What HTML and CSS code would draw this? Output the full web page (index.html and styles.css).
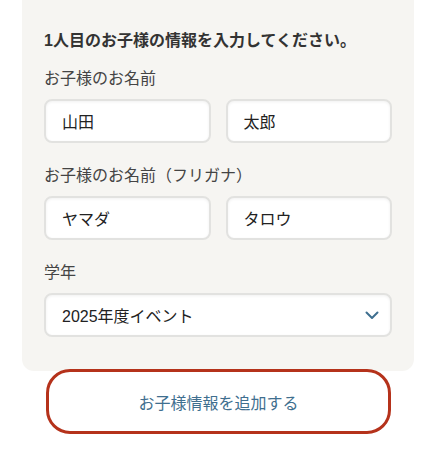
FILE: index.html
```html
<!DOCTYPE html>
<html lang="ja">
<head>
<meta charset="utf-8">
<link rel="stylesheet" href="styles.css">
</head>
<body>
<div class="panel">
  <h2 class="heading">1人目のお子様の情報を入力してください。</h2>
  <div class="field">
    <div class="label">お子様のお名前</div>
    <div class="pair">
      <div class="input">山田</div>
      <div class="input">太郎</div>
    </div>
  </div>
  <div class="field">
    <div class="label">お子様のお名前（フリガナ）</div>
    <div class="pair">
      <div class="input">ヤマダ</div>
      <div class="input">タロウ</div>
    </div>
  </div>
  <div class="field">
    <div class="label">学年</div>
    <div class="input select">
      <span>2025年度イベント</span>
      <svg class="chev" width="14" height="9" viewBox="0 0 14 9"><path d="M1.5 1.5 L7 7 L12.5 1.5" fill="none" stroke="#3f6f8f" stroke-width="2" stroke-linecap="round" stroke-linejoin="round"/></svg>
    </div>
  </div>
</div>
<div class="btn">お子様情報を追加する</div>
</body>
</html>
```
FILE: styles.css
```css
html, body {
  margin: 0;
  padding: 0;
  background: #ffffff;
}
body {
  font-family: "Liberation Sans", "Noto Sans CJK JP", sans-serif;
  color: #333;
  width: 437px;
}
.panel {
  margin: 0 23px 0 22px;
  background: #f6f5f2;
  border-radius: 0 0 12px 12px;
  padding: 29px 22px 34px;
  display: flex;
  flex-direction: column;
  gap: 21px;
}
.heading {
  margin: 0 0 -7px;
  font-size: 16px;
  line-height: 24px;
  font-weight: bold;
  color: #333;
}
.label {
  font-size: 16px;
  line-height: 24px;
  color: #444;
  margin-bottom: 8px;
}
.pair {
  display: grid;
  grid-template-columns: 1fr 1fr;
  gap: 15px;
}
.input {
  box-sizing: border-box;
  height: 44px;
  background: #fff;
  border: 2px solid #e2e2e0;
  border-radius: 8px;
  box-shadow: inset 0 1px 3px rgba(0,0,0,0.06);
  padding: 0 16px;
  display: flex;
  align-items: center;
  font-size: 16px;
  color: #222;
}
.select {
  justify-content: space-between;
  padding-right: 11px;
}
.chev {
  display: block;
}
.btn {
  box-sizing: border-box;
  margin: -2px 0 0 46px;
  width: 345px;
  height: 65px;
  border: 3px solid #b5321b;
  border-radius: 24px;
  background: #fff;
  display: flex;
  align-items: center;
  justify-content: center;
  font-size: 16px;
  color: #3f6f8f;
  position: relative;
}
```
